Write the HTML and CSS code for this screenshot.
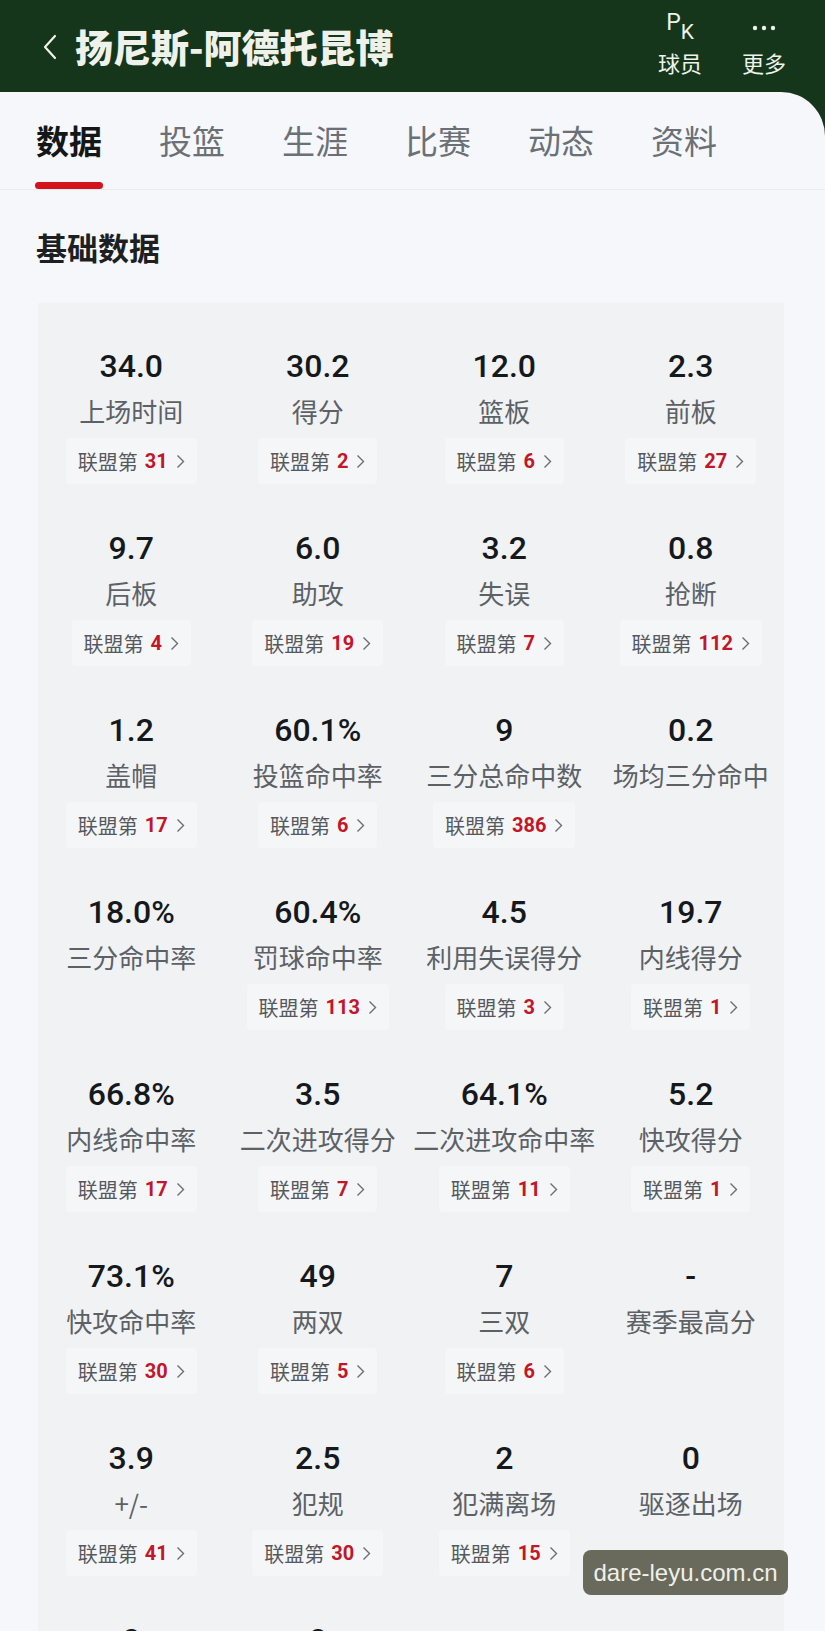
FILE: index.html
```html
<!DOCTYPE html>
<html lang="zh-CN">
<head>
    <meta charset="UTF-8">
    <meta name="viewport" content="width=device-width, initial-scale=1.0">
    <title>扬尼斯-阿德托昆博 - 数据</title>
    <link rel="stylesheet" href="styles.css">
</head>
<body>
    <div class="screen">
        <header class="topbar">
            <a class="back" href="#">
                <svg width="14" height="26" viewBox="0 0 14 26"><polyline points="12,2 2,13 12,24" fill="none" stroke="#eef2ea" stroke-width="2.2" stroke-linecap="round" stroke-linejoin="round"/></svg>
            </a>
            <h1 class="player-name">扬尼斯-阿德托昆博</h1>
            <div class="top-actions">
                <div class="action">
                    <span class="action-icon pk">P<small>K</small></span>
                    <span class="action-label">球员</span>
                </div>
                <div class="action">
                    <span class="action-icon">
                        <svg width="24" height="6" viewBox="0 0 24 6"><circle cx="3" cy="3" r="2.2" fill="#eef2ea"/><circle cx="12" cy="3" r="2.2" fill="#eef2ea"/><circle cx="21" cy="3" r="2.2" fill="#eef2ea"/></svg>
                    </span>
                    <span class="action-label">更多</span>
                </div>
            </div>
        </header>

        <main class="panel">
            <nav class="tabs">
                <span class="tab active">数据</span>
                <span class="tab">投篮</span>
                <span class="tab">生涯</span>
                <span class="tab">比赛</span>
                <span class="tab">动态</span>
                <span class="tab">资料</span>
            </nav>

            <h2 class="section-title">基础数据</h2>
            <div class="stat-card" id="statGrid"></div>
        </main>

        <div class="watermark">dare-leyu.com.cn</div>
    </div>

    <script>
        // value, label, league rank (null = no rank)
        const stats = [
            ['34.0', '上场时间', 31], ['30.2', '得分', 2], ['12.0', '篮板', 6], ['2.3', '前板', 27],
            ['9.7', '后板', 4], ['6.0', '助攻', 19], ['3.2', '失误', 7], ['0.8', '抢断', 112],
            ['1.2', '盖帽', 17], ['60.1%', '投篮命中率', 6], ['9', '三分总命中数', 386], ['0.2', '场均三分命中', null],
            ['18.0%', '三分命中率', null], ['60.4%', '罚球命中率', 113], ['4.5', '利用失误得分', 3], ['19.7', '内线得分', 1],
            ['66.8%', '内线命中率', 17], ['3.5', '二次进攻得分', 7], ['64.1%', '二次进攻命中率', 11], ['5.2', '快攻得分', 1],
            ['73.1%', '快攻命中率', 30], ['49', '两双', 5], ['7', '三双', 6], ['-', '赛季最高分', null],
            ['3.9', '+/-', 41], ['2.5', '犯规', 30], ['2', '犯满离场', 15], ['0', '驱逐出场', null],
            ['0', '技术犯规', null], ['0', '恶意犯规', null]
        ];

        const chevron = '<svg width="9" height="15" viewBox="0 0 9 15"><polyline points="1.5,1.5 7.5,7.5 1.5,13.5" fill="none" stroke="#6a6e73" stroke-width="1.4"/></svg>';

        function renderStats() {
            const grid = document.getElementById('statGrid');
            let html = '';
            stats.forEach(([value, label, rank]) => {
                html += '<div class="stat">';
                html += '<div class="stat-value">' + value + '</div>';
                html += '<div class="stat-label">' + label + '</div>';
                if (rank !== null) {
                    html += '<div class="stat-rank">联盟第<b>' + rank + '</b>' + chevron + '</div>';
                }
                html += '</div>';
            });
            grid.innerHTML = html;
        }

        renderStats();
    </script>
</body>
</html>
```

FILE: styles.css
```css
body {
    margin: 0;
    background: #15361b;
    font-family: "Noto Sans CJK SC", "Noto Sans", sans-serif;
}
.screen {
    position: relative;
    height: 1631px;
    overflow: hidden;
}

/* top bar */
.topbar {
    height: 92px;
    display: flex;
    align-items: center;
    padding: 0 39px 0 43px;
    color: #eef2ea;
}
.back {
    display: flex;
    margin-top: 2px;
}
.player-name {
    flex: 1;
    margin: 0 0 0 18px;
    font-size: 38px;
    font-weight: 900;
    line-height: 44px;
}
.top-actions {
    align-self: flex-start;
    display: flex;
    gap: 40px;
    padding-top: 12px;
}
.action {
    display: flex;
    flex-direction: column;
    align-items: center;
}
.action-icon {
    height: 32px;
    display: flex;
    align-items: center;
    justify-content: center;
}
.pk {
    align-items: flex-start;
    font-family: Roboto, sans-serif;
    font-size: 23px;
    line-height: 22px;
}
.pk small {
    font-size: 21px;
    margin-top: 9px;
}
.action-label {
    margin-top: 4px;
    font-size: 22px;
    line-height: 28px;
}

/* content panel */
.panel {
    background: #f5f7fa;
    border-top-right-radius: 44px;
    height: 1539px;
}
.tabs {
    display: flex;
    gap: 57px;
    padding: 28px 36px 0;
    border-bottom: 1px solid #eaedf0;
}
.tab {
    display: flex;
    flex-direction: column;
    align-items: center;
    font-size: 33px;
    line-height: 40px;
    color: #6b7076;
}
.tab::after {
    content: "";
    width: 104%;
    height: 7px;
    margin-top: 22px;
    border-radius: 4px;
}
.tab.active {
    font-weight: 700;
    color: #141618;
}
.tab.active::after {
    background: #d3141d;
}
.section-title {
    margin: 39px 0 0 36px;
    font-size: 31px;
    line-height: 36px;
    font-weight: 700;
    color: #1d1f22;
}

/* stats grid */
.stat-card {
    margin: 38px 41px 0 38px;
    padding-top: 21px;
    background: #f1f2f4;
    display: grid;
    grid-template-columns: repeat(4, 1fr);
    grid-auto-rows: 182px;
}
.stat {
    display: flex;
    flex-direction: column;
    align-items: center;
    padding-top: 22px;
}
.stat-value {
    font-family: Roboto, sans-serif;
    font-weight: 500;
    font-size: 32px;
    line-height: 40px;
    color: #16191c;
}
.stat-label {
    margin-top: 8px;
    font-size: 26px;
    line-height: 34px;
    color: #5c6166;
    white-space: nowrap;
}
.stat-rank {
    margin-top: 10px;
    height: 46px;
    padding: 0 12px;
    display: flex;
    align-items: center;
    background: #f5f6f7;
    border-radius: 4px;
    font-size: 20px;
    color: #55595e;
}
.stat-rank b {
    font-family: Roboto, sans-serif;
    font-weight: 700;
    color: #c2162a;
    margin: 0 8px 0 7px;
}

.watermark {
    position: absolute;
    left: 583px;
    top: 1550px;
    width: 205px;
    height: 45px;
    border-radius: 8px;
    background: #696a5b;
    color: #f0f0eb;
    font-family: "Liberation Sans", Arial, sans-serif;
    font-size: 24px;
    line-height: 45px;
    text-align: center;
}
```
